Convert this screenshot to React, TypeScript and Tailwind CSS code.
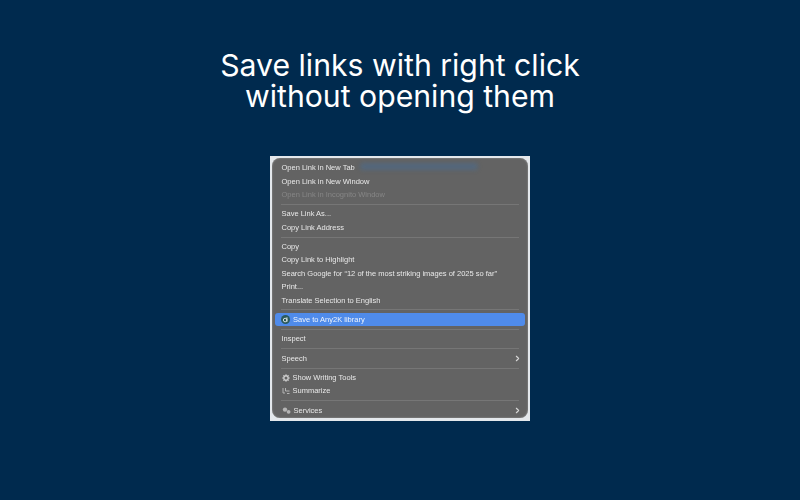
import React from 'react';
import { ChevronRight } from 'lucide-react';

const Item: React.FC<{ label: string; dim?: boolean; arrow?: boolean; icon?: React.ReactNode }> = ({ label, dim, arrow, icon }) => (
  <div className={`flex h-[13.35px] items-center justify-between whitespace-nowrap pl-[9.5px] pr-[6px] text-[7.5px] leading-none ${dim ? 'text-[#868686]' : 'text-[#e8e8e8]'}`}>
    <div className="flex items-center gap-[3px]">
      {icon}
      <span>{label}</span>
    </div>
    {arrow && <ChevronRight className="h-[9px] w-[9px] text-[#d8d8d8]" strokeWidth={3} />}
  </div>
);

const Sep: React.FC = () => <div className="mx-[9px] my-[2.5px] h-px bg-[#767676]" />;

export default function App() {
  return (
    <div className="flex h-[500px] w-[800px] flex-col items-center overflow-hidden bg-[#002a4e] pt-[50px]">
      <h1 className='text-center font-["Inter",sans-serif] text-[30.2px] font-normal leading-[31px] text-white'>
        Save links with right click
        <br />
        without opening them
      </h1>

      {/* 右键菜单截图 */}
      <div className="mt-[44px] h-[265px] w-[260px] bg-[#e4e8ec] p-[2px] pb-[3px]">
        <div className='relative h-full w-full overflow-hidden rounded-[8px] bg-[#636363] pt-[3.5px] font-["Liberation_Sans",Arial,sans-serif] shadow-[inset_0_0_2px_#a0a0a0]'>
          {/* 背后透出的模糊文字 */}
          <div className="absolute left-[88px] top-[5px] h-[7px] w-[118px] rounded-sm bg-[#4d6a88] opacity-70 blur-[2px]" />

          <div className="relative blur-[0.3px]">
            <Item label="Open Link in New Tab" />
            <Item label="Open Link in New Window" />
            <Item label="Open Link in Incognito Window" dim />
            <Sep />
            <Item label="Save Link As..." />
            <Item label="Copy Link Address" />
            <Sep />
            <Item label="Copy" />
            <Item label="Copy Link to Highlight" />
            <Item label="Search Google for “12 of the most striking images of 2025 so far”" />
            <Item label="Print..." />
            <Item label="Translate Selection to English" />
            <Sep />
            <div className="mx-[3px] flex h-[13.5px] items-center gap-[3px] whitespace-nowrap rounded-[3px] bg-[#4f8bea] pl-[6px] text-[7.5px] leading-none text-[#eef4fd]">
              <svg className="h-[9px] w-[9px]" viewBox="0 0 10 10">
                <circle cx="5" cy="5" r="5" fill="#2c5a5c" />
                <circle cx="4.6" cy="5.6" r="2" fill="none" stroke="#e8eeee" strokeWidth="1" />
                <path d="M6.6 2.5v5" stroke="#e8eeee" strokeWidth="1" />
              </svg>
              <span>Save to Any2K library</span>
            </div>
            <Sep />
            <Item label="Inspect" />
            <Sep />
            <Item label="Speech" arrow />
            <Sep />
            <Item
              label="Show Writing Tools"
              icon={
                <svg className="h-[8px] w-[8px]" viewBox="0 0 8 8" fill="none" stroke="#cfcfcf">
                  <circle cx="4" cy="4" r="2.2" strokeWidth="1.4" />
                  <path d="M4 0v1.2M4 6.8V8M0 4h1.2M6.8 4H8M1.2 1.2l.8.8M6 6l.8.8M1.2 6.8L2 6M6 2l.8-.8" strokeWidth="0.8" />
                </svg>
              }
            />
            <Item
              label="Summarize"
              icon={
                <svg className="h-[8px] w-[8px]" viewBox="0 0 8 8" fill="none" stroke="#bdbdbd" strokeWidth="0.9">
                  <path d="M1 1v5h2M3.5 1v3h4M5 6.5h2.5" />
                </svg>
              }
            />
            <Sep />
            <Item
              label="Services"
              icon={
                <svg className="h-[9px] w-[9px]" viewBox="0 0 9 9" fill="#b5b5b5">
                  <circle cx="3" cy="3.6" r="2.2" />
                  <circle cx="6.6" cy="5.8" r="1.9" />
                </svg>
              }
              arrow
            />
          </div>
        </div>
      </div>
    </div>
  );
}
